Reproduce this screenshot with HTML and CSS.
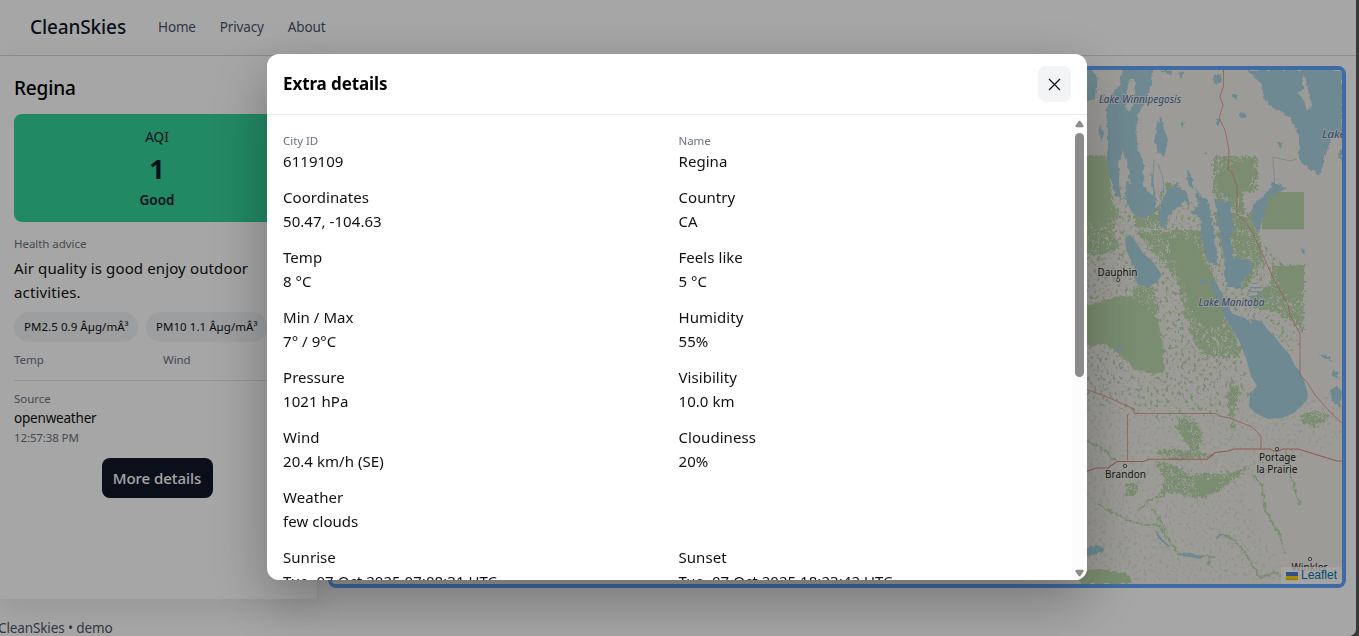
FILE: index.html
```html
<!DOCTYPE html>
<html lang="en">
<head>
<meta charset="utf-8">
<title>CleanSkies</title>
<link rel="stylesheet" href="styles.css">
</head>
<body>
<div class="app">
  <header class="topbar">
    <span class="brand">CleanSkies</span>
    <nav class="nav"><a>Home</a><a>Privacy</a><a>About</a></nav>
  </header>
  <main class="main">
    <aside class="sidebar">
      <h2 class="city">Regina</h2>
      <div class="aqi"><span class="aqi-label">AQI</span><b class="aqi-num">1</b><span class="aqi-text">Good</span></div>
      <div class="muted advice-label">Health advice</div>
      <p class="advice">Air quality is good enjoy outdoor activities.</p>
      <div class="chips"><span class="chip chip-a">PM2.5 0.9 Âµg/mÂ³</span><span class="chip chip-b">PM10 1.1 Âµg/mÂ³</span></div>
      <div class="pair muted"><span>Temp</span><span>Wind</span></div>
      <div class="source"><div class="muted">Source</div><div class="source-name">openweather</div><div class="muted time">12:57:38 PM</div></div>
      <button class="more">More details</button>
    </aside>
    <section class="map">
      <svg class="map-art" viewBox="332 70 1010 514">
        <defs>
          <filter id="rag" x="-5%" y="-5%" width="110%" height="110%">
            <feTurbulence type="fractalNoise" baseFrequency=".22" numOctaves="2" seed="4"/>
            <feDisplacementMap in="SourceGraphic" scale="5" xChannelSelector="R" yChannelSelector="G"/>
          </filter>
          <filter id="dense" x="0" y="0" width="100%" height="100%">
            <feTurbulence type="fractalNoise" baseFrequency=".3" numOctaves="3" seed="9" result="n"/>
            <feColorMatrix in="n" values="0 0 0 0 1  0 0 0 0 1  0 0 0 0 1  9 0 0 0 -3.2" result="m"/>
            <feComposite in="SourceGraphic" in2="m" operator="in" result="c"/>
            <feDisplacementMap in="c" in2="n" scale="9" xChannelSelector="R" yChannelSelector="G"/>
          </filter>
          <filter id="sparse" x="0" y="0" width="100%" height="100%">
            <feTurbulence type="fractalNoise" baseFrequency=".32 .26" numOctaves="4" seed="21" result="n"/>
            <feColorMatrix in="n" values="0 0 0 0 1  0 0 0 0 1  0 0 0 0 1  7 0 0 0 -3.9" result="m"/>
            <feComposite in="SourceGraphic" in2="m" operator="in"/>
          </filter>
        </defs>
        <rect class="land" x="332" y="70" width="1010" height="514"/>
        <g class="wood" filter="url(#sparse)">
          <path d="M1080 195L1160 190 1250 225 1300 285 1300 350 1240 355 1255 400 1180 425 1080 400Z"/>
          <path d="M1080 400L1240 405 1342 395 1342 440 1240 490 1290 580 1080 584Z" opacity=".4"/>
        </g>
        <g class="wood" filter="url(#dense)">
          <path d="M1080 155H1109L1112 200 1120 215 1108 240 1080 230Z"/>
          <path d="M1213 156H1258V192H1242L1248 222 1260 240 1240 232 1213 195Z"/>
          <path d="M1166 183H1180V192H1160V228H1135V212L1160 205Z"/>
          <path d="M1136 230H1202L1210 262 1218 300 1242 350 1234 358 1200 355 1188 328 1178 285 1165 262 1150 250Z"/>
          <path d="M1213 212H1255L1264 258 1245 290 1225 270Z"/>
          <path d="M1080 230H1112L1120 248 1100 256 1080 252Z"/>
          <path d="M1272 265H1304V334L1298 326 1275 310 1255 310 1250 298 1270 285Z"/>
          <path d="M1133 286L1152 285 1160 312 1148 320 1134 300Z"/>
          <path d="M1230 383L1240 387 1236 412 1232 440 1228 400Z"/>
          <path d="M1178 417L1194 420 1203 435 1196 457 1184 440 1176 428Z"/>
          <path d="M1154 461L1173 464 1190 474 1224 474 1252 466 1220 490 1202 499 1168 492 1158 498 1165 478Z"/>
          <path d="M1302 413L1318 410 1330 417 1314 427 1302 422Z"/>
          <path d="M1127 484L1138 484 1134 496 1125 496Z"/>
          <path d="M1155 452L1170 449 1200 452 1215 456 1180 460 1160 457Z"/>
        </g>
        <g class="wood" filter="url(#rag)">
          <path d="M1080 157H1105L1110 170 1110 222 1080 224Z"/>
          <path d="M1216 176L1236 162 1254 158 1252 180 1236 200 1219 192Z"/>
          <path d="M1080 302L1090 305 1112 298 1132 296 1146 308 1158 320 1163 345 1164 372 1152 374 1135 370 1115 350 1105 344 1080 347Z"/>
          <path d="M1168 239L1192 238 1202 260 1212 274 1225 300 1223 328 1204 325 1192 312 1182 280Z"/>
          <path d="M1080 570L1102 569 1128 574 1132 584H1080Z"/>
          <path d="M1196 480L1220 478 1215 493 1200 496Z"/>
        </g>
        <path class="wood" d="M1267 193L1271 192H1304V229.500H1262V219Z"/>
        <path class="wood" d="M1276 266H1304V288L1290 298 1278 280Z"/>
        <g class="creek" filter="url(#rag)">
          <path d="M1097 504L1124 518 1138 524 1160 526 1178 554 1197 556 1215 557M1138 510L1152 498 1165 496M1224 534L1240 545 1250 562 1262 580M1253 474L1262 486 1265 510 1280 535 1285 554M1286 450L1292 480 1300 505M1086 440L1105 450 1115 461M1152 508L1166 530M1210 556L1208 565M1262 578L1275 572 1290 582"/>
        </g>
        <g class="water" filter="url(#rag)">
          <path d="M1086 70H1092L1097 78 1095 98 1088 102 1084 95Z"/>
          <path d="M1123 70H1152L1151 85 1146 104 1138 112 1136 130 1138 150 1144 162 1143 186 1154 196 1151 178 1152 170 1155 195 1155 210 1150 216 1138 218 1127 205 1125 183 1130 174 1124 155 1118 165 1122 200 1115 195 1108 168 1108 138 1106 110 1112 94 1119 86Z"/>
          <path d="M1160 116L1163 125 1168 140 1165 156 1158 152 1154 140Z"/>
          <path d="M1166 190L1175 186 1186 192 1191 208 1185 200 1168 216 1165 228 1160 226 1158 212Z"/>
          <path d="M1187 170L1192 176 1193 190 1188 184Z"/>
          <path d="M1195 186L1200 196 1208 200 1214 232 1218 265 1208 262 1202 238 1200 218 1190 212 1198 206Z"/>
          <path d="M1214 198L1224 203 1230 198 1231 214 1234 225 1230 240 1234 258 1250 260 1252 272 1244 278 1240 288 1228 288 1224 275 1225 262 1221 238Z"/>
          <path d="M1211 278L1218 286 1223 300 1217 298 1211 288Z"/>
          <path d="M1253 205L1264 195 1270 188 1273 182 1288 188 1278 192 1268 196 1266 210 1262 222 1258 232 1252 220Z"/>
          <path d="M1246 70H1342V136L1331 138 1325 158 1320 175 1302 164 1299 158 1299 137 1290 116 1278 111 1265 101 1261 83Z"/>
          <path d="M1080 550L1096 545 1104 547 1103 552 1086 557 1080 555Z"/>
          <path d="M1340 150L1342 148V160L1338 158ZM1214 78L1219 76 1218 82ZM1240 113L1245 116 1241 118ZM1217 121L1220 119 1219 125ZM1276 142L1281 146 1278 145ZM1233 96L1237 94 1235 99ZM1204 153L1208 152 1206 156ZM1159 70L1172 70 1170 75ZM1178 73L1185 71 1181 79Z"/>
          <path d="M1332 368L1337 372 1340 380 1333 376ZM1330 390L1337 386 1342 392 1340 408 1332 400ZM1319 353L1328 357 1334 362 1324 358ZM1301 249L1306 251 1304 255ZM1117 344L1127 350 1118 351ZM1120 366L1124 367 1120 370Z"/>
          <path d="M1214 76L1220 74 1222 80 1217 84 1213 80ZM1239 112L1245 113 1246 118 1241 119ZM1232 94L1238 94 1236 100ZM1216 119L1221 118 1220 125 1216 124ZM1276 141L1282 144 1281 148ZM1100 124L1104 132 1102 142 1099 134ZM1101 95L1105 93 1103 104ZM1181 121L1185 122 1183 130Z"/>
        </g>
        <g class="water">
          <path d="M1125 240C1125 235 1132 235 1134 239L1143 253 1153 262 1162 275 1157 282 1148 287 1138 285 1133 275 1135 268 1127 252Z"/>
          <path d="M1216 292L1224 302 1233 314 1245 318 1252 324 1250 319 1261 321 1268 330 1275 337 1281 345 1290 355 1295 366 1299 370 1304 380 1308 394 1307 400 1294 413 1282 418 1268 419 1255 413 1249 406 1250 394 1257 386 1251 376 1246 358 1240 343 1230 325 1224 316Z"/>
          <path d="M1200 280L1208 278 1206 284 1201 284Z"/>
          <path d="M1252 283H1256V284H1252M1250 287H1261V288.300H1250M1248 291H1263V292.300H1249M1250 295.500H1267V297H1248M1262 262H1264V263Z"/>
          <path d="M1155 529L1163 540 1170 546 1168 547 1158 538ZM1176 554L1190 553 1203 557 1200 559ZM1216 538L1219 534 1226 534 1220 536 1217 540Z"/>
        </g>
        <g class="land" filter="url(#rag)">
          <path d="M1129 78L1135 80 1134 98 1130 112 1126 108 1127 92Z"/>
          <path d="M1303 75L1306 80 1309 95 1311 106 1307 111 1304 101 1299 94 1303 88Z"/>
          <path d="M1122 149L1127 160 1129 178 1131 184 1126 181 1120 168Z"/>
        </g>
        <g class="stream"><path d="M1154 160L1153 182M1158 164L1163 178 1164 193M1275 192L1273 157 1290 161 1297 159"/></g>
        <g class="road">
          <path d="M1223.500 70V86L1220 97 1223 105 1219 118 1225 130 1229 150 1228 170 1232 172 1237 186V215L1244 220 1252 232 1262 253 1273 278 1288 305 1290 315 1300 334V375L1307 382 1315 395 1330 412 1342 423"/>
          <path d="M1080 387L1105 396 1134 409V413.500H1216L1219 416 1230 418 1252 427 1261 436V448"/>
          <path d="M1127.500 460V415L1129 413.500"/>
        </g>
        <path class="road major" d="M1080 474L1096 468H1108L1117 461.500H1143L1149 459.300H1207L1215 452.500 1228 451 1234 449H1270L1276 452 1283 449H1298L1337 461H1342"/>
        <g class="dots"><circle cx="1118" cy="280" r="1.700"/><circle cx="1125" cy="466" r="1.700"/><circle cx="1277" cy="449" r="1.700"/><circle cx="1310" cy="559" r="1.700"/></g>
        <g class="place">
          <text x="1097.500" y="276" textLength="40">Dauphin</text>
          <text x="1105" y="478" textLength="41">Brandon</text>
          <text x="1259" y="461" textLength="37">Portage</text>
          <text x="1256.500" y="472.500" textLength="41">la Prairie</text>
          <text x="1291.500" y="570.500" textLength="36">Winkler</text>
        </g>
        <g class="lake">
          <text x="1099" y="103" textLength="82">Lake Winnipegosis</text>
          <text x="1198.500" y="305.500" textLength="66">Lake Manitoba</text>
          <text class="lake-big" x="1322" y="137.500">Lake</text>
        </g>
      </svg>
      <div class="attribution"><svg class="flag" viewBox="0 0 12 8"><path fill="#4c7be1" d="M0 0h12v4H0z"/><path fill="#ffd500" d="M0 4h12v3H0z"/><path fill="#e0bc00" d="M0 7h12v1H0z"/></svg><span>Leaflet</span></div>
    </section>
  </main>
  <footer class="footer">CleanSkies • demo</footer>
</div>

<div class="backdrop">
  <div class="modal">
    <div class="modal-head">
      <h3 class="modal-title">Extra details</h3>
      <button class="close" aria-label="Close"><svg width="13" height="13" viewBox="0 0 13 13"><path d="M1 1l11 11M12 1L1 12" fill="none" stroke="#111" stroke-width="1.150"/></svg></button>
    </div>
    <div class="modal-body">
      <div class="grid">
        <div><div class="muted k">City ID</div><div>6119109</div></div>
        <div><div class="muted k">Name</div><div>Regina</div></div>
        <div><div>Coordinates</div><div>50.47, -104.63</div></div>
        <div><div>Country</div><div>CA</div></div>
        <div><div>Temp</div><div>8 °C</div></div>
        <div><div>Feels like</div><div>5 °C</div></div>
        <div><div>Min / Max</div><div>7° / 9°C</div></div>
        <div><div>Humidity</div><div>55%</div></div>
        <div><div>Pressure</div><div>1021 hPa</div></div>
        <div><div>Visibility</div><div>10.0 km</div></div>
        <div><div>Wind</div><div>20.4 km/h (SE)</div></div>
        <div><div>Cloudiness</div><div>20%</div></div>
        <div class="wide"><div>Weather</div><div>few clouds</div></div>
        <div><div>Sunrise</div><div>Tue, 07 Oct 2025 07:08:31 UTC</div></div>
        <div><div>Sunset</div><div>Tue, 07 Oct 2025 18:23:42 UTC</div></div>
      </div>
      <div class="scrollbar">
        <svg width="9" height="8" viewBox="0 0 10 8"><path d="M4 .8Q5 0 6 .8L9.500 6Q9.700 7.500 8.500 7.500H1.500Q.3 7.500 .5 6Z" fill="#8b8b8b"/></svg>
        <div class="thumb"></div>
        <svg class="down" width="9" height="8" viewBox="0 0 10 8"><path d="M4 7.200Q5 8 6 7.200L9.500 2Q9.700 .5 8.500 .5H1.500Q.3 .5 .5 2Z" fill="#8b8b8b"/></svg>
      </div>
    </div>
  </div>
</div>
</body>
</html>
```
FILE: styles.css
```css
* { box-sizing: border-box; }
html { background: #575757; overflow: hidden; }
body { margin: 0; height: 636px; overflow: hidden; font: 15px/24px "Noto Sans", "Open Sans", sans-serif; color: #111; letter-spacing: .05px; }
h2, h3, p { margin: 0; }
button { border: 0; font: inherit; letter-spacing: inherit; }
.app { width: 1356px; height: 636px; background: #fff; border-bottom-right-radius: 7px; overflow: hidden; display: flex; flex-direction: column; }
.topbar { height: 56px; flex: none; border-bottom: 1px solid #d9dadc; padding: 0 30px 2px; display: flex; align-items: center; gap: 32px; }
.brand { font-size: 19px; font-weight: 500; color: #0f172a; letter-spacing: -.12px; }
.nav { display: flex; gap: 24px; font-size: 13.5px; color: #475569; letter-spacing: -.15px; }
.main { height: 543px; flex: none; display: flex; }
.sidebar { width: 318px; border-right: 1px solid #ececec; box-shadow: 0 10px 30px rgba(15, 23, 42, .1); padding: 17px 17px 0 14px; display: flex; flex-direction: column; }
.city { font-size: 19px; line-height: 30px; font-weight: 500; color: #000; letter-spacing: -.15px; }
.aqi { margin-top: 11px; height: 108px; background: #34d399; border-radius: 8px; display: flex; flex-direction: column; align-items: center; color: #0f172a; padding-top: 12px; }
.aqi-label { font-size: 13.5px; line-height: 22px; }
.aqi-num { font-size: 27px; line-height: 42px; }
.aqi-text { font-size: 13.5px; line-height: 20px; font-weight: 600; }
.muted { font-size: 11.5px; line-height: 18px; color: #6b7280; letter-spacing: -.05px; }
.k { padding-top: 1px; height: 18px; }
.advice-label { margin-top: 13px; }
.advice { margin-top: 3px; letter-spacing: .13px; }
.chips { display: flex; gap: 8px; margin-top: 8px; }
.chip { height: 30px; border-radius: 15px; background: #f1f3f6; padding: 0 10px; font-size: 11.5px; line-height: 30px; white-space: nowrap; }
.chip-a { width: 124px; }
.chip-b { width: 121px; }
.pair { display: grid; grid-template-columns: 1fr 1fr; gap: 12px; margin-top: 9px; padding-bottom: 11px; border-bottom: 1px solid #e5e7eb; }
.source { padding-top: 9px; }
.source-name { font-size: 13.5px; line-height: 21px; letter-spacing: -.2px; }
.time { letter-spacing: -.12px; }
.more { align-self: center; margin-top: 11px; width: 111px; height: 40px; border-radius: 8px; background: #111827; color: #fff; font-weight: 500; padding: 0; letter-spacing: -.05px; }
.map { position: relative; width: 1018px; height: 522px; margin: 10px 0 0 10px; border: 4px solid #60a5fa; border-radius: 8px; overflow: hidden; }
.map-art { display: block; width: 1010px; height: 514px; }
.land { fill: #f2efe9; }
.wood { fill: #bcd9ad; }
.water { fill: #aad3df; }
.stream { fill: none; stroke: #aac8d0; stroke-width: .7; }
.creek { fill: none; stroke: #bcd9ad; stroke-width: 2; stroke-dasharray: 9 1; }
.road { fill: none; stroke: #e39a8b; stroke-width: .9; }
.major { stroke: #e08a7c; stroke-width: 1.1; }
.dots { fill: #eee; stroke: #444; stroke-width: .8; }
.place, .lake { font: 10px "Noto Sans", sans-serif; letter-spacing: 0; fill: #222; stroke: #f7f4ee; stroke-opacity: .7; stroke-width: 2px; paint-order: stroke; }
.lake { font-style: italic; fill: #4a6fa5; }
.lake-big { font-size: 11.5px; }
.attribution { position: absolute; right: 0; bottom: 0; width: 61px; height: 17px; background: rgba(255, 255, 255, .8); display: flex; align-items: center; gap: 3px; padding-left: 5px; color: #0078a8; font: 12px/17px "Liberation Sans", Arial, sans-serif; letter-spacing: 0; }
.flag { width: 12px; height: 8px; flex: none; }
.footer { padding-top: 19px; font-size: 13.5px; line-height: 20px; color: #475569; margin-left: -2px; letter-spacing: -.12px; }
.backdrop { position: fixed; inset: 0; background: rgba(0, 0, 0, .35); padding: 54px 0 0 267px; }
.modal { width: 820px; height: 526px; border-radius: 12px; background: #fff; overflow: hidden; box-shadow: 0 20px 60px rgba(0, 0, 0, .3); display: flex; flex-direction: column; }
.modal-head { height: 61px; flex: none; border-bottom: 1px solid #ececec; display: flex; align-items: center; justify-content: space-between; padding: 0 16px; }
.modal-title { font-size: 17px; font-weight: 700; color: #000; letter-spacing: -.1px; }
.close { width: 33px; height: 36px; border-radius: 8px; background: #f3f4f6; padding: 0; display: flex; align-items: center; justify-content: center; }
.modal-body { flex: 1; min-height: 0; display: flex; }
.grid { width: 805px; padding: 16px; display: grid; grid-template-columns: 1fr 1fr; gap: 12px 18px; align-content: start; }
.wide { grid-column: 1 / -1; }
.scrollbar { width: 15px; background: #fcfcfc; display: flex; flex-direction: column; align-items: center; padding: 5px 0 3px; }
.scrollbar svg { flex: none; }
.thumb { width: 9px; height: 244px; margin-top: 5px; border-radius: 5px; background: #8b8b8b; }
.down { margin-top: auto; }
```
